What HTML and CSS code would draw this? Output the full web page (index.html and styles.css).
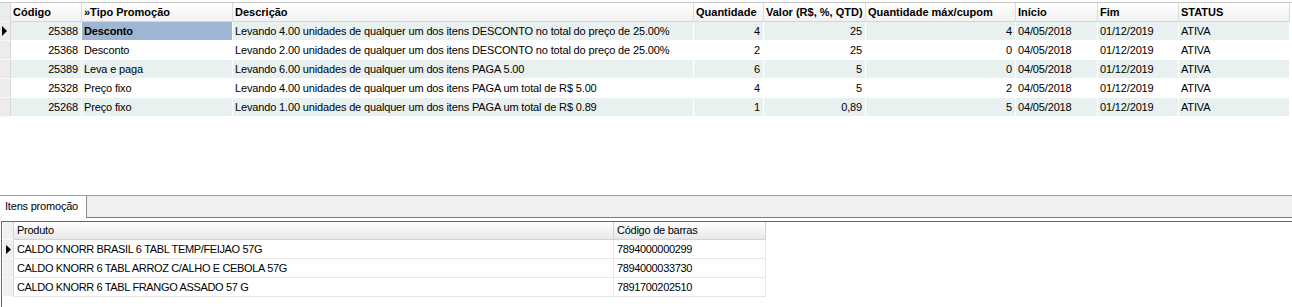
FILE: index.html
```html
<!DOCTYPE html>
<html>
<head lang="pt">
    <meta charset="UTF-8">
    <title>Promoções</title>
    <link rel="stylesheet" href="styles.css">
</head>
<body>
<div class="top-pane">
    <div class="grid grid-top">
        <div class="row head">
            <div class="cell ind"></div>
            <div class="cell">Código</div>
            <div class="cell">»Tipo Promoção</div>
            <div class="cell">Descrição</div>
            <div class="cell">Quantidade</div>
            <div class="cell">Valor (R$, %, QTD)</div>
            <div class="cell">Quantidade máx/cupom</div>
            <div class="cell">Início</div>
            <div class="cell">Fim</div>
            <div class="cell">STATUS</div>
        </div>
        <div class="row alt">
            <div class="cell ind"><svg class="arrow" width="5" height="10" viewBox="0 0 5 10"><polygon points="0,0 5,5 0,10" fill="#000"/></svg></div>
            <div class="cell num">25388</div>
            <div class="cell sel">Desconto</div>
            <div class="cell">Levando 4.00 unidades de qualquer um dos itens DESCONTO no total do preço de 25.00%</div>
            <div class="cell num">4</div>
            <div class="cell num">25</div>
            <div class="cell num">4</div>
            <div class="cell">04/05/2018</div>
            <div class="cell">01/12/2019</div>
            <div class="cell">ATIVA</div>
        </div>
        <div class="row">
            <div class="cell ind"></div>
            <div class="cell num">25368</div>
            <div class="cell">Desconto</div>
            <div class="cell">Levando 2.00 unidades de qualquer um dos itens DESCONTO no total do preço de 25.00%</div>
            <div class="cell num">2</div>
            <div class="cell num">25</div>
            <div class="cell num">0</div>
            <div class="cell">04/05/2018</div>
            <div class="cell">01/12/2019</div>
            <div class="cell">ATIVA</div>
        </div>
        <div class="row alt">
            <div class="cell ind"></div>
            <div class="cell num">25389</div>
            <div class="cell">Leva e paga</div>
            <div class="cell">Levando 6.00 unidades de qualquer um dos itens PAGA 5.00</div>
            <div class="cell num">6</div>
            <div class="cell num">5</div>
            <div class="cell num">0</div>
            <div class="cell">04/05/2018</div>
            <div class="cell">01/12/2019</div>
            <div class="cell">ATIVA</div>
        </div>
        <div class="row">
            <div class="cell ind"></div>
            <div class="cell num">25328</div>
            <div class="cell">Preço fixo</div>
            <div class="cell">Levando 4.00 unidades de qualquer um dos itens PAGA um total de R$ 5.00</div>
            <div class="cell num">4</div>
            <div class="cell num">5</div>
            <div class="cell num">2</div>
            <div class="cell">04/05/2018</div>
            <div class="cell">01/12/2019</div>
            <div class="cell">ATIVA</div>
        </div>
        <div class="row alt">
            <div class="cell ind"></div>
            <div class="cell num">25268</div>
            <div class="cell">Preço fixo</div>
            <div class="cell">Levando 1.00 unidades de qualquer um dos itens PAGA um total de R$ 0.89</div>
            <div class="cell num">1</div>
            <div class="cell num">0,89</div>
            <div class="cell num">5</div>
            <div class="cell">04/05/2018</div>
            <div class="cell">01/12/2019</div>
            <div class="cell">ATIVA</div>
        </div>
    </div>
</div>

<div class="tabs">
    <div class="tab-strip">
        <div class="tab">Itens promoção</div>
        <div class="strip-fill"></div>
    </div>
    <div class="tab-page">
        <div class="panel">
            <div class="grid grid-sub">
                <div class="row head">
                    <div class="cell ind"></div>
                    <div class="cell">Produto</div>
                    <div class="cell">Código de barras</div>
                </div>
                <div class="row">
                    <div class="cell ind"><svg class="arrow" width="5" height="9" viewBox="0 0 5 9"><polygon points="0,0 5,4.5 0,9" fill="#000"/></svg></div>
                    <div class="cell">CALDO KNORR BRASIL 6 TABL TEMP/FEIJAO 57G</div>
                    <div class="cell">7894000000299</div>
                </div>
                <div class="row">
                    <div class="cell ind"></div>
                    <div class="cell">CALDO KNORR 6 TABL ARROZ C/ALHO E CEBOLA 57G</div>
                    <div class="cell">7894000033730</div>
                </div>
                <div class="row">
                    <div class="cell ind"></div>
                    <div class="cell">CALDO KNORR 6 TABL FRANGO ASSADO 57 G</div>
                    <div class="cell">7891700202510</div>
                </div>
            </div>
        </div>
    </div>
</div>
</body>
</html>
```

FILE: styles.css
```css
* {
    margin: 0;
    padding: 0;
    box-sizing: border-box;
}

body {
    width: 1292px;
    height: 307px;
    overflow: hidden;
    background: #fff;
    color: #000;
    font-family: "Liberation Sans", Arial, sans-serif;
    font-size: 11px;
}

.cell {
    white-space: nowrap;
    overflow: hidden;
}

.num {
    text-align: right;
}

.ind {
    display: flex;
    align-items: center;
    padding-left: 3px;
}

/* grade de promoções */
.top-pane {
    height: 195px;
    padding-top: 2px;
}

.grid-top {
    border-top: 1px solid #c9c9c9;
}

.grid-top .row {
    display: grid;
    grid-template-columns: 11px 71px 151px 461px 70px 102px 150px 82px 81px 111px;
    height: 19px;
}

.grid-top .cell {
    line-height: 18px;
    padding: 0 3px 0 2px;
    letter-spacing: -0.15px;
    border-right: 1px solid #fff;
    border-bottom: 1px solid #fff;
}

.grid-top .head {
    font-weight: bold;
}

.grid-top .head .cell {
    letter-spacing: 0;
    background: linear-gradient(#fff, #f1f1f1);
    border-right: 1px solid #dcdcdc;
    border-bottom: 1px solid #d6d6d6;
}

.grid-top .alt .cell {
    background: #e8f0f0;
}

.grid-top .cell.ind,
.grid-top .alt .cell.ind {
    background: #ececec;
    border-right: 1px solid #d8d8d8;
    border-bottom: 1px solid #f8f8f8;
}

.grid-top .alt .cell.sel {
    background: #9fb6d2;
    font-weight: bold;
}

/* abas */
.tabs {
    border-top: 1px solid #a0a0a0;
}

.tab-strip {
    display: flex;
    height: 22px;
    background: #f0f0f0;
}

.tab {
    width: 87px;
    padding-left: 5px;
    line-height: 21px;
    letter-spacing: -0.2px;
    background: #fff;
    border-right: 1px solid #8c8c8c;
}

.strip-fill {
    flex: 1;
    border-bottom: 1px solid #7a7a7a;
}

.tab-page {
    padding-top: 3px;
}

.panel {
    height: 86px;
    margin-left: 1px;
    padding-left: 1px;
    border-top: 1px solid #666;
    border-left: 1px solid #666;
}

/* grade de itens */
.grid-sub {
    width: 763px;
}

.grid-sub .row {
    display: grid;
    grid-template-columns: 11px 600px 152px;
    height: 19px;
}

.grid-sub .cell {
    line-height: 18px;
    padding-left: 3px;
    letter-spacing: -0.35px;
    border-right: 1px solid #e6e6e6;
    border-bottom: 1px solid #e6e6e6;
}

.grid-sub .head {
    height: 18px;
}

.grid-sub .head .cell {
    line-height: 17px;
    letter-spacing: -0.25px;
    background: linear-gradient(#fff, #e8e8e8);
    border-right: 1px solid #d4d4d4;
    border-bottom: 1px solid #d4d4d4;
}

.grid-sub .cell.ind {
    background: #f0f0f0;
    border-right: 1px solid #d4d4d4;
    border-bottom: 1px solid #fafafa;
}
```
